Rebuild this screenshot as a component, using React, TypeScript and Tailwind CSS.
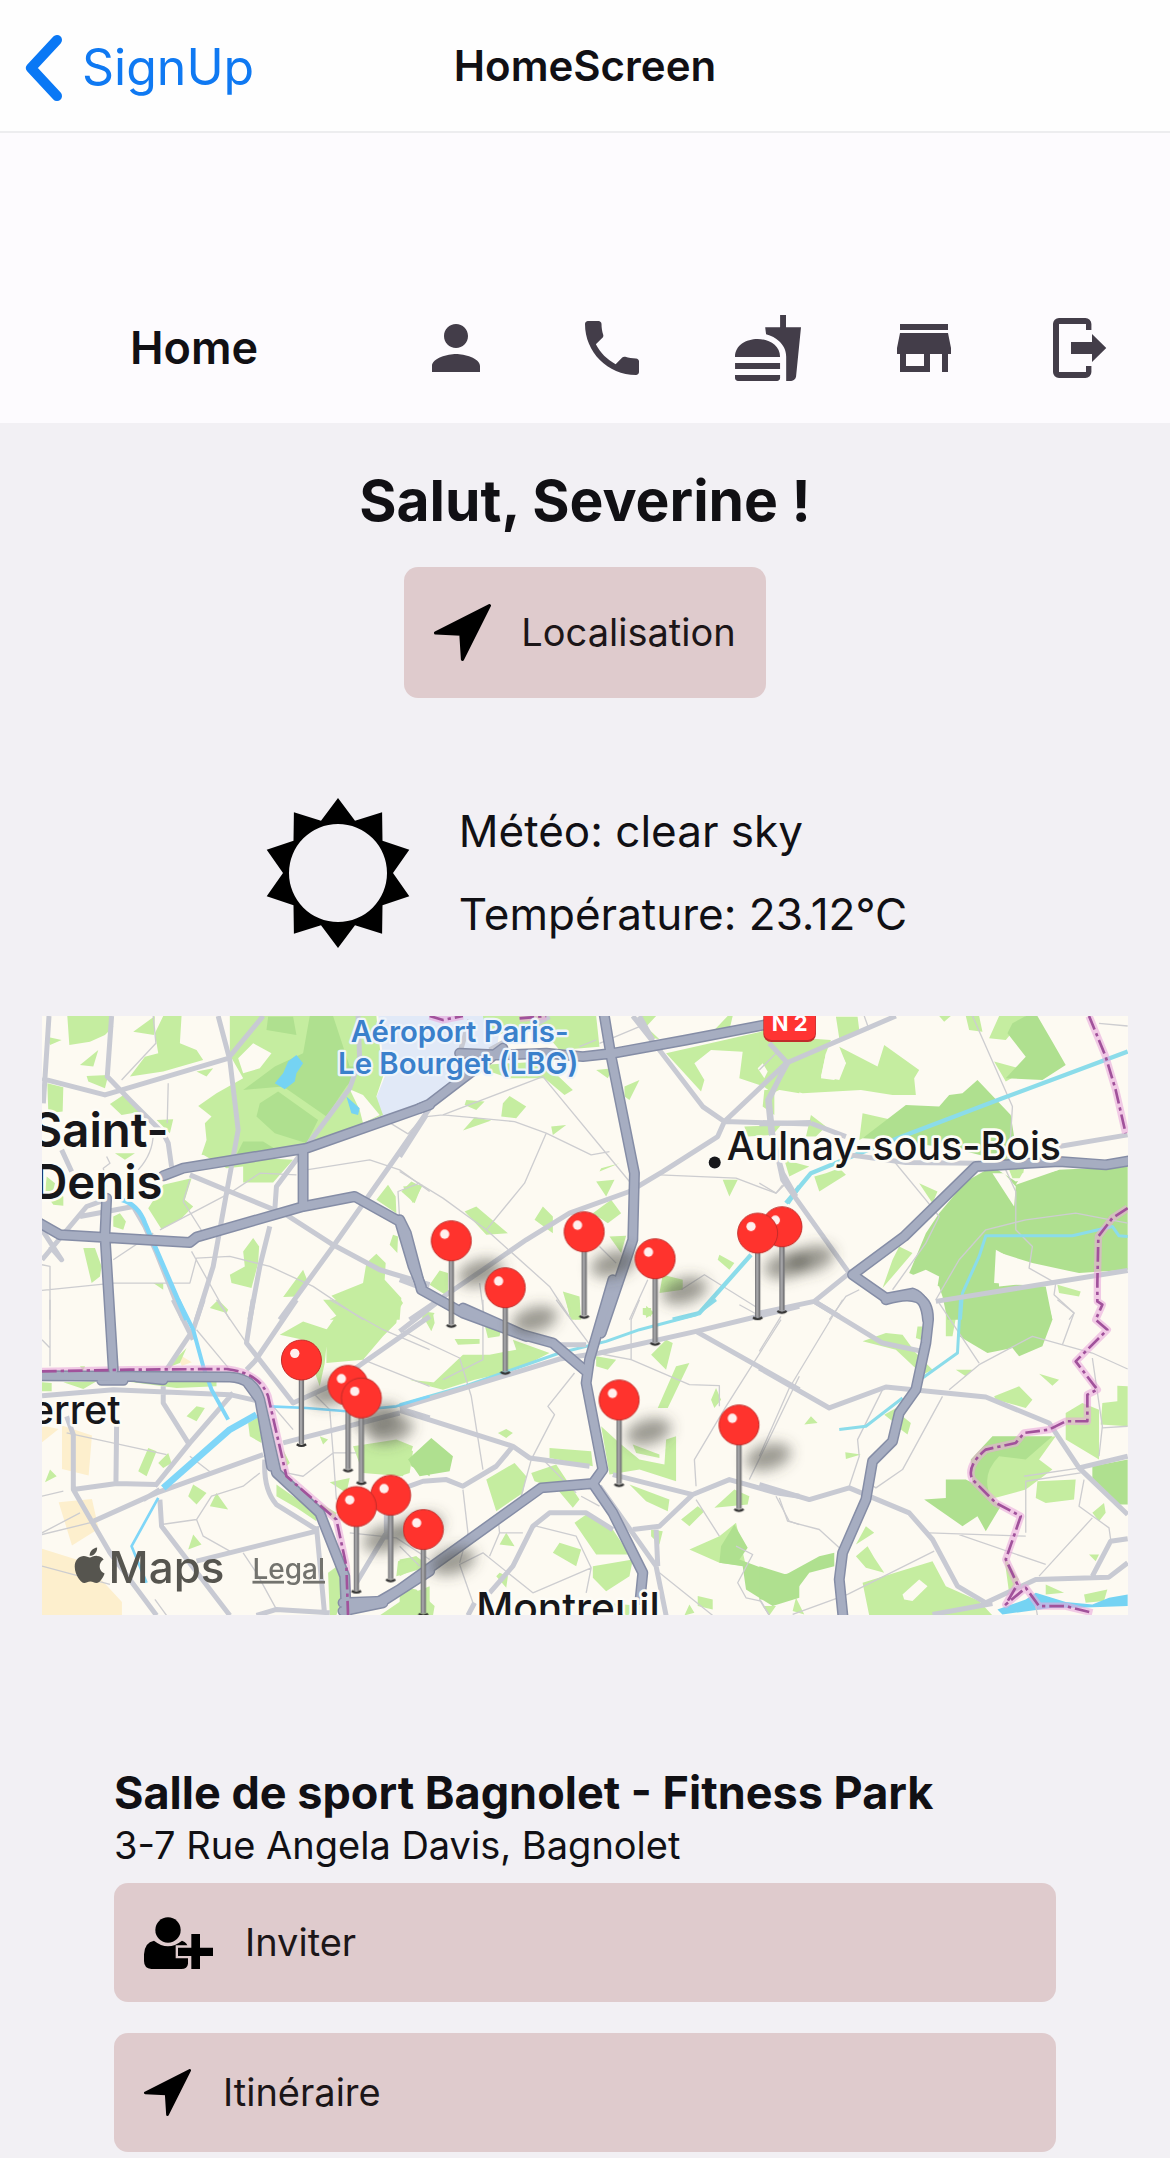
import type { ReactNode } from "react";
import { MdFastfood, MdPerson, MdPhone, MdStore } from "react-icons/md";
import { FaApple } from "react-icons/fa";

/* ---------- icons ---------- */

function LogoutIcon() {
  return (
    <svg viewBox="0 0 24 24" className="size-[72px]" fill="currentColor" aria-hidden="true">
      <path d="M15.8 6V4a2 2 0 0 0-2-2H5a2 2 0 0 0-2 2v16a2 2 0 0 0 2 2h8.800a2 2 0 0 0 2-2v-2H14v2H5V4h9v2z" />
      <path d="M9 10h7V7.300L20.750 12 16 16.700V14H9z" />
    </svg>
  );
}

function ArrowIcon({ className }: { className: string }) {
  return (
    <svg viewBox="0 0 142 142" className={className} aria-hidden="true">
      <path
        d="M138 4 L4 72 L67 75 L71 138 Z"
        fill="#000"
        stroke="#000"
        strokeWidth="8"
        strokeLinejoin="round"
      />
    </svg>
  );
}

function PersonAddIcon() {
  return (
    <svg viewBox="0 0 207 156" className="h-[52px] w-[69px]" aria-hidden="true">
      <circle cx="72" cy="39" r="38" />
      <path d="M30 71 Q72 104 114 71 Q132 76 132 96 L132 140 Q130 156 112 156 L22 156 Q0 154 0 132 L0 112 Q2 76 30 71Z" />
      <path
        d="M142 51h26v41h39v25h-39v39h-26v-39h-40v-25h40z"
        stroke="#dfcbcd"
        strokeWidth="14"
        paintOrder="stroke"
      />
    </svg>
  );
}

const sunPath = Array.from({ length: 20 }, (_, i) => {
  const r = i % 2 === 0 ? 75 : 55;
  const a = (i * Math.PI) / 10;
  return `${(Math.sin(a) * r).toFixed(1)} ${(-Math.cos(a) * r).toFixed(1)}`;
}).join(" L");

function SunIcon() {
  return (
    <svg viewBox="-75 -75 150 150" className="size-[150px]" aria-hidden="true">
      <path
        fillRule="evenodd"
        d={`M${sunPath} Z M-49 0 a49 49 0 1 0 98 0 a49 49 0 1 0 -98 0Z`}
      />
    </svg>
  );
}

/* ---------- map ---------- */

type Tile = {
  x: number;
  y: number;
  park: string;
  wood: string;
  gap: string;
  water: string;
  thin: string;
  minor: string;
  major: string;
};

const tiles: Tile[] = [
  {
    x: -36,
    y: -48,
    park:
      "M112 48L240 48 250 80 225 105 180 125 118 135Z M50 110L95 120 60 135Z M400 48L455 48 450 130 500 150 520 180 400 215 300 230 345 170 385 160 375 100Z M310 95L375 48 372 105Z M205 150L190 200 150 195Z M170 228L235 225 225 265 175 245Z M52 250L100 262 98 335 55 340Z M285 282L310 310 335 335 275 345 240 312Z M600 48L1040 48 1060 230 1040 290 1060 345 830 440 610 480 515 465 530 420 525 370 545 350 505 318 560 280 640 235 600 165Z M520 465L790 480 730 548 640 548 640 500 590 505Z M400 555L485 535 465 600 490 620 455 655 395 688 355 625Z M255 460L315 460 285 480Z M380 360L430 358 420 400Z M50 530L75 550 70 570 100 590 100 618 70 615 45 580Z M250 650L270 640 288 665 280 690 250 680Z M160 745L195 745 215 800 210 830 185 850Z M670 715L688 740 685 790 665 865 605 850 600 825 645 800 640 755Z M820 810L832 840 800 890 760 892Z M1040 762L1068 790 1065 840 1115 895 1110 960 900 960 950 930 905 888 1000 850 1010 790Z M1075 555L1098 590 1100 640 1040 600Z M1145 545L1175 560 1155 610 1115 575Z M1090 705L1105 710 1103 760 1080 735Z M565 900L595 930 590 940 540 925Z M370 850L400 850 400 870Z M500 215L550 205 530 230Z",
    wood:
      "M840 48L910 48 960 200 1000 200 950 260 890 350 760 260 640 270 735 200 820 160Z M745 275L865 360 830 430 735 400 680 350 690 310Z M715 50L790 50 800 105 710 90Z M640 425L700 425 740 450 620 465Z",
    gap: "M625 175L670 130 725 160 690 205 640 220Z M960 268L1000 285 1050 345 1000 370 990 330Z",
    water: "M800 165L820 190 800 220 795 245 765 268 735 250 760 220 775 185Z M950 290L990 325 985 345 965 340Z",
    thin:
      "M370 48L378 130 275 240 M415 250L412 370 M370 400Q370 460 325 510 M1050 350L1135 402 1200 330 M830 510L1020 480 1110 510 1200 575 M1170 550L1105 575 1110 660 M60 960L60 800 36 795 M36 872L250 850 480 850 500 775 600 770 720 800 850 860 1000 960 M485 755L600 960 M390 690L600 580 690 520 800 525 M460 605L520 700 M480 540L460 605 M250 780L370 700 M230 470L240 490 220 505 230 560",
    minor:
      "M57 48L40 310 M245 48L232 230 300 300 400 400 415 430 425 500 M36 236L225 285 595 175 700 48 M565 48L600 180 625 390 590 580 550 800 500 960 M985 48L990 180 960 265 740 560 735 630 M480 525L600 575 770 645 910 735 1050 810 1200 855 M1200 325L1100 470 910 740 750 960 M720 680L690 800 660 960 M36 780L170 620 240 595 M36 690L95 780 60 740 M150 650L310 620 345 680 380 760 460 960 M95 450L125 515",
    major: "M400 528L460 505 830 445 1200 315 M820 450L820 620 M20 665L90 705 480 728 500 712 820 620 975 590 1110 665 1150 800 1175 860 M230 595L225 705 250 1110",
  },
  {
    x: 1074,
    y: -48,
    park:
      "M250 48L590 48 600 140 480 150 420 80 260 110Z M240 195L430 185 520 270 495 285 435 235 330 235 270 215Z M590 210L640 205 625 235Z M675 260L720 240 690 300 675 290Z M330 288L380 320 350 355 305 350 310 310Z M200 300L255 305 230 330 195 315Z M225 352L275 362 190 392Z M455 380L500 375 460 405Z M720 48L770 48 740 80 780 118 740 110Z M985 48L1000 48 990 90 945 90Z M800 160L1085 95 1200 100 1200 280 1110 265 1020 235 1030 155 935 150 885 190 915 240 905 275Z M1095 270L1125 270 1125 345 1090 320Z M1035 380L1145 375 1120 405 1045 410Z M605 505L660 490 600 515Z M590 545L645 540 620 590Z M635 600L665 640 625 670 580 640Z M630 710L680 708 665 760Z M430 620L460 650 460 700 405 660Z M195 635L230 620 325 700 260 705Z M10 560L70 555 40 610Z M120 812L145 820 145 890 90 855Z M960 765L1005 790 990 810 955 780Z M970 540L1015 540 990 590Z M790 825L850 840 850 870 780 880Z M490 875L540 890 545 960 515 960Z M740 918L765 940 740 955Z M75 935L105 940 90 960 65 960Z M0 895L10 910 0 925Z",
    wood: "",
    gap: "M1075 205L1090 190 1105 215 1095 235Z",
    water: "",
    thin:
      "M80 350L130 345 345 365 440 400 575 465 630 455 M130 345L430 230 690 545 M440 400L375 550 260 690 M0 515L130 595 260 690 450 860 515 960 M600 740L650 790 M780 525L1010 535 1130 580 1150 555 M745 840L690 960 M845 870L915 825 1075 925 M600 130L720 80 M240 850L255 960 M540 140L590 120",
    minor:
      "M0 470L80 345 M700 48L780 150 910 320 975 365 955 410 790 515 690 575 510 640 380 720 250 810 30 960 M720 48L760 120 M975 365L1160 190 M975 365L1230 372 M1110 130L1165 190 1105 300 1115 400 1150 520 1190 590 M0 840L80 870 M180 160L210 60 M270 150L450 50",
    major: "M60 325L90 312 190 235 310 145 M180 160L300 165 440 160 550 170 640 160 860 120 1120 70 M610 20L635 170 705 520 700 720 605 1000 M0 660L20 700 65 870 190 940 380 1010",
  },
  {
    x: 2154,
    y: -48,
    park:
      "M0 100L40 60 140 115 215 120 200 160 185 230 240 240 260 190 240 140 355 200 375 135 480 210 465 235 470 285 400 285 305 270 130 280 70 265 40 280 0 250Z M230 50L295 50 300 90 240 115Z M620 48L660 48 670 95 630 90Z M720 48L800 48 740 120 690 115Z M310 340L400 360 360 390 300 420Z M155 345L200 380 170 410 140 410Z M240 505L260 525 180 575 165 530 200 520Z M75 480L150 500 90 530Z M540 48L575 48 555 65Z M705 185L800 210 740 245Z M480 550L535 575 520 610Z M420 740L460 760 370 865 400 780Z M895 855L965 875 960 890 900 880Z M750 510L795 505 790 535 760 535Z M560 830L600 860 570 960Z",
    wood:
      "M800 48L835 48 880 125 920 195 850 240 740 235 800 170 745 100 760 70Z M655 240L755 345 765 410 760 490 600 450 400 420 310 415 440 315 540 320 570 285 610 280Z M770 545L900 510 1106 500 1106 810 960 820 820 790 710 755 705 850 860 860 880 960 565 960 550 890 540 860 450 820 500 700 540 640 620 545 700 500Z",
    gap: "M200 160L240 150 260 190 225 240 185 235Z M700 520L735 520 770 560 765 620Z M710 750L800 800 880 825 870 845 720 860Z M450 830L500 810 540 830 530 890 490 890Z M770 555L900 510 880 500 790 520Z",
    water: "",
    thin:
      "M315 48L330 90 M640 48L760 320 755 400 740 510 770 575 770 690 820 740 810 805 890 850 885 885 945 940 930 960 M1020 70L1106 78 M0 550L50 580 80 550 M405 485L500 600 540 650 500 730 400 870 M530 900L600 780 680 690 800 660 950 640 1106 670 M300 870L260 890 210 960 M0 210L50 160",
    minor:
      "M80 190L410 48 M80 190L30 300 40 400 70 540 270 820 165 905 0 940 M155 370L260 410 M0 372L155 368 M270 465L440 488 660 490 M900 440L1106 405 M530 905L1106 812 M165 905L240 950",
    major: "M1130 480L1040 495 900 485 650 500 435 710 280 825 380 895 460 880 Q500 895 505 960",
  },
  {
    x: -36,
    y: 852,
    park:
      "M36 248L65 250 65 275 36 275Z M150 200L165 200 160 215Z M410 205L470 145 450 190Z M100 248L200 245 160 268Z M500 320L525 325 500 365 470 350Z M355 445L380 455 350 530 325 515Z M415 460L425 490 400 505 385 490Z M60 510L80 530 45 548Z M490 555L530 580 500 615 475 590Z M560 580L595 630 540 620Z M490 705L515 735 475 750Z M655 370L690 350 695 430 660 410Z M820 65L895 90 885 190 870 260 820 120 750 105Z M920 48L880 0 1110 0 1100 70 1060 110 1000 180 890 190 890 90Z M740 555L860 640 860 665 800 625 740 590Z M870 610L920 640 915 665Z M895 820L950 780 940 880 920 948 900 948Z M900 548L960 535 950 580Z M970 440L1100 420 1150 440 1120 530 1000 520Z M870 410L895 420 880 435Z M760 450L780 490 770 500Z M1105 785L1160 770 1200 800 1100 830Z M1050 948L1150 880 1200 860 1200 948Z M250 240L440 235 560 245 560 260 440 265Z",
    wood: "M1140 480L1200 430 1200 530 1145 500Z",
    gap: "",
    water: "",
    thin:
      "M60 0L60 200 M36 120L60 145 M110 400L410 465 M560 0L650 130 M500 90L600 210 M36 590L100 575 M36 705L200 665 M36 700L150 640 M395 675L500 660 545 590 640 560 690 520 M500 660L520 710 600 755 M640 760L680 820 740 930 M36 800L240 855 M480 470L545 520 M730 320L790 390 M850 280L900 330 910 460 820 530 770 520 M910 460L980 460 M900 0L1060 90 1200 150 M1000 180L1200 260 M960 700L1100 715 1200 780 M910 460L920 600 M375 900L410 948",
    minor:
      "M36 288L250 270 600 285 690 305 M520 0L490 90 410 210 M800 0L675 185 650 210 M670 0L650 130 790 310 900 260 1200 50 M110 350L130 405 130 570 240 760 380 948 M260 380L258 550 M130 570L260 552 380 555 M400 260L400 310 475 430 M610 280L480 430 375 560 M190 665L380 580 700 465 M390 600L395 680 600 948 M500 785L860 695 M860 680L885 948 M705 480Q700 570 740 615L860 690 M980 850L1070 700 M1110 340L760 430 M1120 330L1200 355 M680 948L740 930 900 940 M430 0L490 120 M1070 720L1070 640 M340 600L390 570",
    major:
      "M215 242L280 242 M0 228L600 232Q670 235 690 300L740 520 870 640 945 830 950 960 M650 245L690 300 M690 300L725 500 M320 232L400 240 M940 910L1060 905 1200 815 M940 935L1060 910",
  },
  {
    x: 1074,
    y: 852,
    park:
      "M70 50L100 40 105 70 95 95Z M500 0L540 0 530 60 510 50Z M730 25L755 25 755 50 730 45Z M165 118L240 118 240 132 175 135Z M255 75L305 85 300 110 265 115Z M340 120L450 160 380 195 290 225 225 240 130 270 90 260 190 165 270 165 350 150Z M590 170L650 180 625 210 590 200Z M755 165L800 120 820 130 800 210Z M830 200L870 190 805 325 775 325Z M950 265L965 300 945 325 935 300Z M320 388L340 400 320 415 295 400Z M450 445L575 455 580 500 450 475Z M605 380L660 430 720 480 795 495 800 420 830 410 830 545 720 510 630 525Z M700 435L780 465 780 475 710 460Z M260 540L345 490 380 530 370 580 290 635Z M395 520L470 495 540 600 520 625 470 565 405 545Z M690 555L810 600 805 635 740 605Z M525 670L560 645 640 690 690 765 590 765Z M320 700L345 740 300 735Z M480 730L545 750 530 800 460 760Z M580 800L700 780 690 830 620 875 580 835Z M300 820L325 830 320 865 290 830Z M1005 570L1050 590 1045 615 945 625Z M895 620L915 635 870 680 845 660Z M755 690L790 695 780 735 755 710Z M870 750L960 710 1010 670 1040 800 960 790Z M895 890L940 900 940 930 895 920Z M870 915L885 940 855 948Z M0 430L40 455 30 520 0 530Z M0 780L50 770 60 800 0 830Z M0 860L50 870 105 920 100 948 0 948Z M620 910L720 920 740 948 610 948Z M1090 920L1110 948 1130 920Z M30 240L120 250 130 270Z",
    wood:
      "M95 415L160 470 150 515 60 530 25 480Z M1005 675L1045 745 1020 780 1140 825 1200 820 1200 895 1120 920 1040 870 1030 800 960 790 965 740Z",
    gap: "",
    water: "",
    thin:
      "M10 95L180 175 215 290 250 510 M250 0L250 180 130 240 M470 0L575 140 M720 0L695 60 695 180 870 255 960 258 960 320 M695 180L590 160 M525 220L445 320 465 345 395 480 365 590 M430 480L530 580 M1145 60L980 320 885 480 890 560 M1200 230L1050 540 M1020 15L1075 45 M890 600L960 710 M1130 590L1170 665 1200 675 M410 680L530 710 575 805 400 880 250 760 180 795 220 910 M575 805L560 880 M780 820L940 948 M190 570L205 700 180 790 M295 650L300 700 370 700 M300 700L270 770 M545 590L600 620 M1010 740L1060 765 1015 850 1040 895 1085 905 1110 948 M0 740L60 800",
    minor:
      "M1200 20L890 95 600 160 480 178 0 325 M890 95L1200 270 M0 332L340 440 390 475 570 500 M340 440L290 500 190 560 140 540 70 545 0 570 M640 525L880 585 990 540 1130 580 1200 590 M880 585L780 680 700 690 M600 560L770 800 800 948 M640 690L560 640 450 640 400 680 340 800 270 880 M225 910L205 948 M480 135L560 135 M770 690L775 800 M110 10L0 95",
    major:
      "M190 25L370 105 460 130 560 215 M640 -60L570 180 560 250 610 510 580 552 425 565 0 870-60 905 M580 552L640 640 730 820 722 900",
  },
  {
    x: 2154,
    y: 852,
    park:
      "M310 125L380 100 430 105 470 160 520 210 490 225 410 150Z M475 80L490 80 485 120 470 115Z M590 210L640 210 620 230Z M840 222L900 240 880 258Z M705 290L780 260 820 300 800 325 710 300Z M1075 258L1106 260 1106 380 1025 375 1030 310 1075 305Z M920 340L970 310 1020 330 1020 480 920 420Z M155 350L175 370 135 375Z M430 350L455 370 445 405 425 390Z M258 458L305 465 260 478Z M640 540L640 480 720 430 890 410 840 480 880 510 800 570 690 600Z M835 545L950 540 945 600 860 610 830 595Z M1035 610L1040 640 1020 665 1000 640Z M320 680L345 700 290 735Z M325 740L345 775 375 820 320 805 290 770Z M310 850L520 785 560 860 660 905 700 948 330 948Z M860 855L915 880 860 885Z M975 885L1045 870 1035 905 980 910Z M990 765L1020 765 1010 785Z M735 770L780 840 750 880Z M110 895L135 945 100 935Z M375 345L420 320 400 365Z M560 0L600 0 580 110 560 110Z",
    wood:
      "M605 0L865 0 880 60 850 140 780 170 760 145 685 160 600 110Z M635 480L700 410 880 410 800 480 720 470Q660 530 700 600L640 560Z M560 540L620 540 660 560 725 620 680 695 655 650 610 680 495 600 560 595Z M1000 500L1106 480 1106 615 1080 615 1000 540Z M0 800L80 825 180 770 225 760 225 800 150 820 90 900 0 900Z",
    gap: "M430 885L480 840 505 860 460 905 435 900Z",
    water: "M1106 885L1050 895 1000 915 920 908 830 880 800 900 715 930 730 945 880 925 960 925 1106 920Z",
    thin:
      "M65 50L0 155 M250 0L90 265 0 470 M370 270L295 420 300 470 270 560 M550 290L430 510 350 565 320 545 M895 0L945 40 910 135 M570 270L660 195 820 110 1000 160 1106 208 M540 10L660 190 M1000 175L1030 380 1020 470 M1030 385L1106 380 M965 520L800 545 800 700 M965 505L795 530 M975 540L960 620 1050 685 1055 720 M1000 655L840 830 M510 700L800 710 M600 705L860 795 M525 755L265 885 100 945 M60 595L85 665 180 690 240 745 M0 900L30 948 M830 920L835 948",
    minor:
      "M165 5L370 130 490 155 M0 205L210 325 380 262 680 292 870 370 960 505 1106 645 M960 505L1106 470 M0 555L150 600 270 565 450 640 520 720 595 860 680 910 830 840 1050 833 1106 790 M1000 830L1055 725 1106 718 M520 945L700 912",
    major: "M380 0Q510 -40 508 60L500 130 470 270 420 340 400 425 340 485 320 600 250 760 240 840 255 990",
  },
];

type Line = { x: number; y: number; d: string; w: number };

const streams: Line[] = [
  { x: 1074, y: 852, d: "M0 315L200 258 480 160 620 125 720 90 890 45 950 0", w: 9 },
  { x: 1074, y: -48, d: "M820 960L900 940 1055 765 M1165 610L1200 560", w: 13 },
  { x: 2154, y: -48, d: "M80 610L155 520 290 465 440 405 730 295 1106 155", w: 13 },
  { x: 2154, y: -48, d: "M1106 710L1080 708 1060 680 940 708 680 708 660 770 610 880 604 960", w: 9 },
  { x: 2154, y: 852, d: "M604 0L595 160 490 235 M430 295L320 380 240 390", w: 9 },
];

const canals: Line[] = [
  { x: -36, y: -48, d: "M275 600Q325 615 345 670L470 960", w: 14 },
  { x: -36, y: 852, d: "M445 0L490 90 520 200 545 270 595 360", w: 12 },
  { x: -36, y: 852, d: "M680 345L600 390 400 565", w: 20 },
  { x: -36, y: 852, d: "M385 595L305 740 350 850", w: 8 },
  { x: -36, y: 852, d: "M720 320L830 325 950 335 1100 320 1200 290", w: 8 },
];

const borders: Line[] = [
  { x: -36, y: 852, d: "M36 215L300 210 590 208Q690 220 715 290L770 530 920 660 950 800 955 948", w: 0 },
  { x: 2154, y: -48, d: "M990 48L1040 170 1070 270 1100 400", w: 0 },
  { x: 2154, y: -48, d: "M1106 625L1060 655 1018 710 1015 850 1015 905 1030 915 1010 960 1045 990 950 1085 1015 1170 985 1185 985 1265 920 1265 870 1290 795 1300 770 1330 680 1350Q620 1400 640 1440L710 1510 785 1550 740 1680 775 1755 740 1815 800 1765 840 1820 920 1820 1000 1840", w: 0 },
  { x: 1074, y: -48, d: "M90 48L130 60 190 48 M360 55L440 48", w: 0 },
];

const pins: [number, number][] = [
  [2222, 633],
  [2149, 652],
  [1628, 648],
  [1841, 729],
  [1229, 675],
  [1391, 816],
  [779, 1033],
  [919, 1109],
  [959, 1147],
  [1733, 1153],
  [2093, 1228],
  [1047, 1439],
  [944, 1473],
  [1145, 1542],
];

function Pin({ x, y }: { x: number; y: number }) {
  return (
    <g transform={`translate(${x} ${y})`}>
      <path d="M0 50V252" stroke="#77777a" strokeWidth="16" />
      <path d="M-1 50V252" stroke="#a5a5a8" strokeWidth="7" />
      <path d="M-14 253q14 10 28 0" stroke="#333" strokeWidth="7" fill="none" />
      <circle r="60" fill="#ff332d" stroke="#c22c29" strokeWidth="3" />
      <circle cx="-20" cy="-20" r="14" fill="#fff0ee" />
    </g>
  );
}

function TileLayer({ kind, ...rest }: { kind: keyof Omit<Tile, "x" | "y"> } & React.SVGProps<SVGGElement>) {
  return (
    <g {...rest}>
      {tiles.map((t) => (
        <path key={`${t.x},${t.y}`} transform={`translate(${t.x} ${t.y})`} d={t[kind]} />
      ))}
    </g>
  );
}

function LineLayer({ lines, ...rest }: { lines: Line[] } & React.SVGProps<SVGGElement>) {
  return (
    <g fill="none" {...rest}>
      {lines.map((l, i) => (
        <path key={i} transform={`translate(${l.x} ${l.y})`} d={l.d} strokeWidth={l.w || undefined} />
      ))}
    </g>
  );
}

function CityMap() {
  return (
    <svg
      viewBox="0 0 3261 1800"
      className="block w-full"
      role="group"
      aria-label="Carte des salles de sport"
      strokeLinejoin="round"
    >
      <defs>
        <filter id="pin-shadow" x="-50%" y="-50%" width="200%" height="200%">
          <feGaussianBlur stdDeviation="20" />
        </filter>
      </defs>
      <rect width="3261" height="1800" fill="#fdfaf2" />
      <path
        fill="#fdefcd"
        d="M60 1230L150 1260 140 1380 60 1360Z M50 1460L150 1450 170 1540 90 1590Z M0 1600L130 1640 240 1760 240 1800 0 1800Z M400 1010L450 1040 420 1050Z M0 1230L50 1240 0 1280Z"
      />
      <path fill="#e1e9f7" d="M1010 0H1380L1364 110 1260 200 1164 272 1020 300 1004 245 1030 180Z" />
      <TileLayer kind="park" fill="#c5eda0" />
      <TileLayer kind="wood" fill="#afe08f" />
      <TileLayer kind="gap" fill="#fdfaf2" />
      <TileLayer kind="water" fill="#75d3f3" />
      <TileLayer kind="thin" fill="none" stroke="#cdcdd0" strokeWidth="4" />
      <LineLayer lines={streams} stroke="#8bdcea" />
      <TileLayer kind="minor" fill="none" stroke="#c8cad3" strokeWidth="15" />
      <LineLayer lines={canals} stroke="#7fd6f8" />
      <LineLayer lines={borders} stroke="#e9a9dc" strokeOpacity="0.6" strokeWidth="22" />
      <TileLayer kind="major" fill="none" stroke="#858da6" strokeWidth="33" strokeLinecap="round" />
      <TileLayer kind="major" fill="none" stroke="#a6adc1" strokeWidth="24" strokeLinecap="round" />
      <LineLayer lines={borders} stroke="#a1529b" strokeWidth="8" strokeDasharray="44 12 10 12" />

      <g fontFamily="Inter, sans-serif" fontWeight="500" paintOrder="stroke" strokeLinejoin="round">
        <g fill="#3a80cb" stroke="#eef4fb" strokeWidth="14" fontSize="88" fontWeight="600" textAnchor="middle">
          <text x="1254" y="79">Aéroport Paris-</text>
          <text x="1250" y="174">Le Bourget (LBG)</text>
        </g>
        <g fill="#17171a" stroke="#fdfcf6" strokeWidth="16">
          <g fontSize="142" fontWeight="600" textAnchor="end">
            <text x="380" y="392">Saint-</text>
            <text x="362" y="549">Denis</text>
          </g>
          <g fontSize="118">
            <text x="2056" y="432">Aulnay-sous-Bois</text>
            <text x="1304" y="1819" fontSize="122">Montreuil</text>
            <text x="236" y="1225" textAnchor="end">erret</text>
          </g>
          <circle cx="2020" cy="440" r="18" strokeWidth="8" />
        </g>
      </g>

      <rect x="2166" y="-60" width="158" height="138" rx="24" fill="#c02c2b" />
      <rect x="2168" y="-60" width="154" height="132" rx="22" fill="#ff3433" />
      <text x="2245" y="45" fill="#fff" fontFamily="Inter, sans-serif" fontWeight="700" fontSize="66" textAnchor="middle">
        N 2
      </text>

      <g filter="url(#pin-shadow)" fill="#4a4a44" fillOpacity="0.55">
        {pins.map(([x, y]) => (
          <ellipse key={`${x},${y}`} cx={x + 88} cy={y + 96} rx="70" ry="38" transform={`rotate(-16 ${x + 88} ${y + 96})`} />
        ))}
      </g>
      {pins.map(([x, y]) => (
        <Pin key={`${x},${y}`} x={x} y={y} />
      ))}

      <g fill="#56554f" fontFamily="Inter, sans-serif">
        <g transform="translate(82 1588)">
          <FaApple size={122} color="#56554f" />
        </g>
        <text x="200" y="1704" fontSize="132" fontWeight="500">
          Maps
        </text>
        <a href="#legal">
          <text x="632" y="1690" fontSize="84" fontWeight="500" fill="#73736e" textDecoration="underline">
            Legal
          </text>
        </a>
      </g>
    </svg>
  );
}

/* ---------- screen ---------- */

function NavButton({ label, children }: { label: string; children: ReactNode }) {
  return (
    <button type="button" aria-label={label} className="block text-[#433d49]">
      {children}
    </button>
  );
}

function ActionButton({ icon, label }: { icon: ReactNode; label: string }) {
  return (
    <button
      type="button"
      className="flex h-[119px] w-full items-center gap-8 rounded-[14px] bg-[#dfcbcd] px-[30px] text-[38px] text-[#1c1618]"
    >
      {icon}
      {label}
    </button>
  );
}

export default function App() {
  return (
    <div className="min-h-screen bg-[#f2f0f4] pb-[7px] font-['Inter',sans-serif] text-[#111014]">
      <header className="grid h-[133px] grid-cols-[1fr_auto_1fr] items-center border-b-2 border-[#ededef] bg-[#fefefe]">
        <a href="#signup" className="flex items-center gap-5 pt-1 pl-[25px] text-[50px] text-[#0f79f2]">
          <svg viewBox="0 0 37 66" className="h-[66px] w-[37px]" fill="none" aria-hidden="true">
            <path d="M32 5 L6 33 L32 61" stroke="#0a78f5" strokeWidth="10" strokeLinecap="round" strokeLinejoin="round" />
          </svg>
          SignUp
        </a>
        <h1 className="text-[42px] font-semibold">HomeScreen</h1>
      </header>

      <nav className="flex h-[290px] items-end bg-[#fdfbfe] pr-[54px] pb-[39px] pl-[130px]">
        <h2 className="flex-1 text-[45px] leading-[72px] font-semibold">Home</h2>
        <div className="flex gap-[84px]">
          <NavButton label="Profil">
            <MdPerson className="size-[72px]" />
          </NavButton>
          <NavButton label="Téléphone">
            <MdPhone className="size-[72px]" />
          </NavButton>
          <NavButton label="Restauration">
            <MdFastfood className="size-[72px]" />
          </NavButton>
          <NavButton label="Boutique">
            <MdStore className="size-[72px]" />
          </NavButton>
          <NavButton label="Déconnexion">
            <LogoutIcon />
          </NavButton>
        </div>
      </nav>

      <main className="pt-10">
        <section className="flex flex-col items-center">
          <h2 className="text-[57px] leading-[76px] font-bold">Salut, Severine !</h2>
          <button
            type="button"
            className="mt-7 flex h-[131px] items-center gap-[30px] rounded-[14px] bg-[#dfcbcd] px-[30px] text-[38px] text-[#1c1618]"
          >
            <ArrowIcon className="size-[57px]" />
            Localisation
          </button>
          <div className="mt-[92px] flex items-center gap-[46px]">
            <SunIcon />
            <div className="text-[44px] leading-[83px]">
              <p>Météo: clear sky</p>
              <p>Température: 23.12°C</p>
            </div>
          </div>
        </section>

        <section className="mt-[60px] px-[42px]">
          <CityMap />
        </section>

        <section className="mt-[150px] px-[114px]">
          <h3 className="text-[45px] leading-[56px] font-bold">Salle de sport Bagnolet - Fitness Park</h3>
          <p className="text-[38px] leading-[48px]">3-7 Rue Angela Davis, Bagnolet</p>
          <div className="mt-[14px] flex flex-col gap-[31px]">
            <ActionButton icon={<PersonAddIcon />} label="Inviter" />
            <ActionButton icon={<ArrowIcon className="size-[47px]" />} label="Itinéraire" />
          </div>
        </section>
      </main>
    </div>
  );
}
